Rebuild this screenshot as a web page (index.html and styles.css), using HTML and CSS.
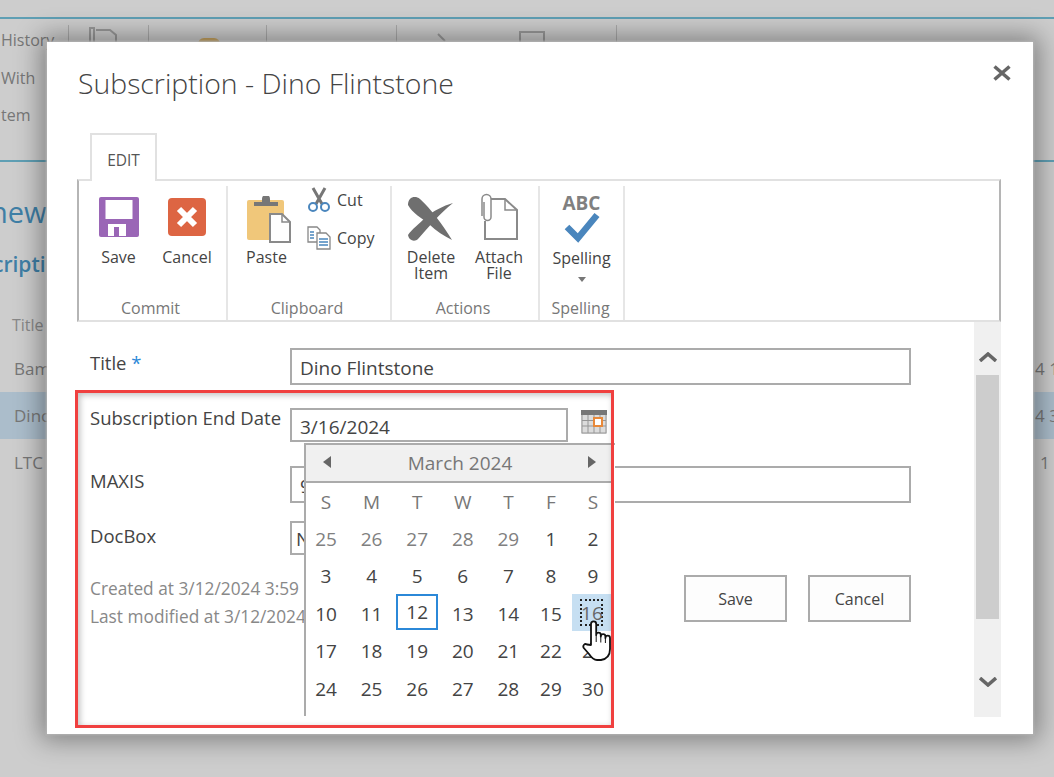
FILE: index.html
```html
<!DOCTYPE html>
<html lang="en">
<head>
<meta charset="utf-8">
<title>Subscription - Dino Flintstone</title>
<link rel="stylesheet" href="styles.css">
</head>
<body>
<div class="page">
  <div class="bg-top"></div>
  <div class="bg-toolbar">
    <div class="bg-tools-text"><span>History</span><span>With</span><span>tem</span></div>
    <div class="bg-tool t1"><svg width="32" height="18" viewBox="0 0 32 18"><path d="M2 18V2h4v16M8 4h14l6 5v9" class="bg-ico"/></svg></div>
    <div class="bg-tool t2"><span class="bg-dot"></span></div>
    <div class="bg-tool t3"><span class="bg-dash"></span></div>
    <div class="bg-tool t4">
      <svg width="20" height="18" viewBox="0 0 20 18"><path d="M6 8l7 7" class="bg-ico"/></svg>
      <svg width="32" height="18" viewBox="0 0 32 18"><path d="M2 18V6h24v12" class="bg-ico"/></svg>
    </div>
    <div class="bg-tool t5"></div>
  </div>
  <div class="bg-heading">new</div>
  <div class="bg-sub">cripti</div>
  <div class="bg-colhead">Title</div>
  <div class="bg-row"><span>Bam</span><span class="bg-val">4 1</span></div>
  <div class="bg-row sel"><span>Dino</span><span class="bg-val">4 3</span></div>
  <div class="bg-row"><span>LTC</span><span class="bg-val narrow">1 1</span></div>
</div>

<div class="dialog">
  <div class="dlg-title">Subscription - Dino Flintstone</div>
  <svg class="close" width="18" height="18" viewBox="0 0 18 18"><path d="M1.500 2.500L16.500 15.500M16.500 2.500L1.500 15.500" class="close-x"/></svg>

  <div class="tabs"><div class="tab">EDIT</div></div>
  <div class="ribbon">
    <div class="group g-commit">
      <div class="cmds">
        <div class="cmd c-save">
          <svg width="40" height="40" viewBox="0 0 40 40"><rect x="0" y="0" width="40" height="40" rx="2" fill="#9a66b6"/><rect x="6.500" y="3" width="27" height="19" fill="#fff"/><rect x="9" y="27" width="18" height="12" fill="#fff"/><rect x="15" y="30" width="5" height="9" fill="#9a66b6"/></svg>
          <span>Save</span>
        </div>
        <div class="cmd c-cancel">
          <svg width="38" height="38" viewBox="0 0 38 38"><rect width="38" height="38" rx="4" fill="#dd6543"/><path d="M11 11L27 27M27 11L11 27" stroke="#fff" stroke-width="6" fill="none"/></svg>
          <span>Cancel</span>
        </div>
      </div>
      <div class="glabel">Commit</div>
    </div>
    <div class="group g-clip">
      <div class="cmds">
        <div class="cmd c-paste">
          <svg width="44" height="47" viewBox="0 0 44 47"><rect x="0" y="4" width="37" height="40" rx="2" fill="#f0c77a"/><path d="M7 10V6h8V3a3 3 0 0 1 8 0v3h8v4z" fill="#777"/><path d="M23 18h12l8 8v20H23z" fill="#fff" stroke="#8a8a8a" stroke-width="2"/><path d="M35 18v8h8" fill="none" stroke="#8a8a8a" stroke-width="1.500"/></svg>
          <span>Paste</span>
        </div>
        <div class="cmd-stack">
          <div class="cmd-small">
            <svg width="24" height="25" viewBox="0 0 24 25"><path d="M6 1L15 17M18 1L9 17" stroke="#777" stroke-width="3" fill="none"/><circle cx="6" cy="20" r="4" fill="none" stroke="#4a86bd" stroke-width="2"/><circle cx="18" cy="20" r="4" fill="none" stroke="#4a86bd" stroke-width="2"/></svg>
            <span>Cut</span>
          </div>
          <div class="cmd-small">
            <svg width="24" height="24" viewBox="0 0 24 24"><path d="M1 1h9l3 3v12H1z" fill="#fff" stroke="#888" stroke-width="1.300"/><path d="M3 6h4M3 9h4M3 12h4" stroke="#4a86bd" stroke-width="1.500"/><path d="M10 7h9l4 4v12H10z" fill="#fff" stroke="#888" stroke-width="1.300"/><path d="M12 13h9M12 16h9M12 19h9" stroke="#4a86bd" stroke-width="1.500"/></svg>
            <span>Copy</span>
          </div>
        </div>
      </div>
      <div class="glabel">Clipboard</div>
    </div>
    <div class="group g-actions">
      <div class="cmds">
        <div class="cmd c-delete">
          <svg width="46" height="44" viewBox="0 0 46 44"><path d="M0 8C0 0 7-2 12 2C22 11 35 28 44 43C36 39 28 34 22 28C14 21 4 16 0 8z" fill="#6f6f6f"/><path d="M45 6C35 9 25 14 18 20C11 27 4 32 0 38C1 44 7 45 10 42C20 31 31 17 45 6z" fill="#6f6f6f"/></svg>
          <span>Delete<br>Item</span>
        </div>
        <div class="cmd c-attach">
          <svg width="38" height="47" viewBox="0 0 38 47"><path d="M10 6H25L37 17V46H5V28" fill="#fff" stroke="#8a8a8a" stroke-width="2"/><path d="M25 6V17H37" fill="none" stroke="#8a8a8a" stroke-width="1.500"/><path d="M6 8V23a3.500 3.500 0 0 0 7 0V5a4 4 0 0 0-9-0V22" transform="translate(-2 1)" fill="#fff" stroke="#8a8a8a" stroke-width="1.500"/></svg>
          <span>Attach<br>File</span>
        </div>
      </div>
      <div class="glabel">Actions</div>
    </div>
    <div class="group g-spell">
      <div class="cmds">
        <div class="cmd c-spell">
          <span class="abc">ABC</span>
          <svg width="36" height="31" viewBox="0 0 36 31"><path d="M3 15L14 26L33 3" fill="none" stroke="#4a86bd" stroke-width="6.500"/></svg>
          <span class="spell-label">Spelling</span>
          <span class="caret"></span>
        </div>
      </div>
      <div class="glabel">Spelling</div>
    </div>
  </div>

  <div class="body">
    <div class="form">
      <div class="row r-title">
        <label class="lbl">Title <span class="req">*</span></label>
        <div class="input i-full">Dino Flintstone</div>
      </div>
      <div class="row r-date">
        <label class="lbl">Subscription End Date</label>
        <div class="date-field">
          <div class="input i-date">3/16/2024</div>
          <svg class="cal-ico" width="26" height="24" viewBox="0 0 26 24"><rect width="26" height="24" fill="#dcdcdc"/><rect width="26" height="5" fill="#777"/><path d="M1 5V23H25V5M1 10.500H25M1 16H25M7 5V23M13 5V23M19 5V23" fill="none" stroke="#969696" stroke-width="1"/><rect x="13" y="8" width="8" height="8" fill="#fff" stroke="#e8893a" stroke-width="2"/></svg>
          <div class="calendar">
            <div class="cal-head">
              <span class="tri tri-l"></span>
              <span class="cal-month">March 2024</span>
              <span class="tri tri-r"></span>
            </div>
            <div class="cal-grid">
              <span class="wd">S</span><span class="wd">M</span><span class="wd">T</span><span class="wd">W</span><span class="wd">T</span><span class="wd">F</span><span class="wd">S</span>
              <span class="d o">25</span><span class="d o">26</span><span class="d o">27</span><span class="d o">28</span><span class="d o">29</span><span class="d">1</span><span class="d">2</span>
              <span class="d">3</span><span class="d">4</span><span class="d">5</span><span class="d">6</span><span class="d">7</span><span class="d">8</span><span class="d">9</span>
              <span class="d">10</span><span class="d">11</span><span class="d today">12</span><span class="d">13</span><span class="d">14</span><span class="d">15</span><span class="d hover"><i class="focus">16</i></span>
              <span class="d">17</span><span class="d">18</span><span class="d">19</span><span class="d">20</span><span class="d">21</span><span class="d">22</span><span class="d">23</span>
              <span class="d">24</span><span class="d">25</span><span class="d">26</span><span class="d">27</span><span class="d">28</span><span class="d">29</span><span class="d">30</span>
            </div>
          </div>
        </div>
      </div>
      <div class="row r-maxis">
        <label class="lbl">MAXIS</label>
        <div class="input i-full">9</div>
      </div>
      <div class="row r-doc">
        <label class="lbl">DocBox</label>
        <div class="input i-select">No</div>
      </div>
      <div class="foot">
        <div class="meta">
          <div>Created at 3/12/2024 3:59 PM</div>
          <div>Last modified at 3/12/2024 3:59 PM</div>
        </div>
        <div class="btns">
          <button class="btn">Save</button>
          <button class="btn">Cancel</button>
        </div>
      </div>
    </div>
    <div class="scroll">
      <svg width="18" height="10" viewBox="0 0 18 10"><path d="M1 9L9 2L17 9" class="chev"/></svg>
      <div class="thumb"></div>
      <svg class="chev-down" width="18" height="10" viewBox="0 0 18 10"><path d="M1 1L9 8L17 1" class="chev"/></svg>
    </div>
  </div>
</div>

<div class="annot"></div>
<svg class="hand" width="31" height="41" viewBox="0 0 31 41"><path d="M9 25V4a2.600 2.600 0 0 1 5.200 0V15a2.300 2.300 0 0 1 4.600 0v1.500a2.300 2.300 0 0 1 4.600 0V18a2.300 2.300 0 0 1 4.600 0V29c0 6-3 10-9 11h-4c-4 0-6-3-8-6L1.800 28c-1.500-2.500 1-5 3.200-3.500z" fill="#fff" stroke="#111" stroke-width="1.800" stroke-linejoin="round"/><path d="M14.200 15v7M18.800 16.500v6M23.400 18v5" stroke="#111" stroke-width="1" fill="none"/></svg>
</body>
</html>
```

FILE: styles.css
```css
* { box-sizing: border-box; }
html, body { margin: 0; padding: 0; }
body {
  width: 1054px;
  height: 777px;
  overflow: hidden;
  position: relative;
  background: #cdcdcd;
  font-family: "Open Sans", "Noto Sans", sans-serif;
  color: #444;
}

/* dimmed page behind the dialog */
.page { color: #777; font-size: 16px; }
.bg-top { height: 19px; border-bottom: 2px solid #5f9fb4; }
.bg-toolbar {
  display: flex;
  height: 143px;
  border-bottom: 2px solid #5f9fb4;
  padding-top: 6px;
}
.bg-tools-text {
  width: 68px;
  display: flex;
  flex-direction: column;
  gap: 17.500px;
  padding-top: 5px;
  line-height: 20px;
  padding-left: 1px;
}
.bg-tool { height: 19px; border-left: 1px solid #aaa; display: flex; align-items: flex-end; }
.t1 { width: 80px; padding-left: 19px; }
.t2 { width: 118px; padding-left: 49px; }
.t3 { width: 130px; padding-left: 51px; }
.t4 { width: 220px; padding-left: 35px; gap: 66px; }
.t5 { width: 40px; }
.bg-ico { fill: none; stroke: #999; stroke-width: 2; }
.bg-dot { width: 22px; height: 6px; background: #c9a45f; border-radius: 11px 11px 0 0; }
.bg-dash { width: 30px; height: 2px; background: #999; }
.bg-heading { margin: 30px 0 0 -10px; font-size: 29px; line-height: 40px; color: #3f7fa6; }
.bg-sub { margin: 19px 0 0 -7px; font-size: 21px; line-height: 26px; font-weight: 600; color: #3f7fa6; }
.bg-colhead { margin: 36px 0 0 12px; line-height: 24px; color: #888; }
.bg-row {
  display: flex;
  justify-content: space-between;
  height: 47px;
  align-items: center;
  padding-left: 14px;
  font-size: 17px;
}
.bg-colhead + .bg-row { margin-top: 8px; }
.bg-row.sel { background: #abbdcb; }
.bg-val { width: 19px; white-space: nowrap; }
.bg-val.narrow { padding-left: 5px; }

/* dialog */
.dialog {
  position: absolute;
  z-index: 0;
  left: 47px;
  top: 42px;
  width: 986px;
  height: 692px;
  background: #fff;
  padding: 0 32px 0 30px;
  box-shadow: 0 0 2px 1px #b5b5b5, 0 0 24px 6px rgba(0, 0, 0, .38);
}
.dlg-title {
  padding: 21px 0 0 1px;
  height: 91px;
  font-size: 28.400px;
  font-weight: 300;
  line-height: 40px;
  color: #444;
  white-space: nowrap;
}
.close { position: absolute; right: 22px; top: 22px; }
.close-x { fill: none; stroke: #666; stroke-width: 3.500; }

.tabs { display: flex; height: 46px; padding-left: 13px; }
.tab {
  width: 67px;
  height: 48px;
  background: #fff;
  border: 2px solid #e1e1e1;
  border-bottom: 0;
  text-align: center;
  font-size: 15.500px;
  line-height: 50px;
  color: #555;
  position: relative;
  z-index: 1;
}
.ribbon {
  display: flex;
  height: 143px;
  border: 2px solid #e1e1e1;
  border-left-color: #b5b5b5;
  border-right-color: #b5b5b5;
  padding-top: 5px;
}
.group {
  display: flex;
  flex-direction: column;
  border-right: 2px solid #e6e6e6;
}
.g-commit { width: 149px; }
.g-clip { width: 164px; }
.g-actions { width: 148px; }
.g-spell { width: 85px; }
.cmds { display: flex; height: 111px; }
.glabel { text-align: center; font-size: 16px; line-height: 22px; color: #777; padding-right: 4px; }
.g-spell .glabel { padding-right: 2px; }

.cmd {
  display: flex;
  flex-direction: column;
  align-items: center;
  font-size: 16px;
  line-height: 16px;
  text-align: center;
  color: #444;
}
.cmd svg { flex: none; }
.c-save { padding: 11px 0 0 19px; width: 60px; }
.c-save span { margin-top: 12px; }
.c-cancel { padding-top: 12px; margin-left: 29px; width: 38px; }
.c-cancel span { margin-top: 13px; }
.c-paste { width: 44px; margin-left: 19px; padding-top: 10px; }
.c-paste span { margin-top: 6px; margin-left: -5px; }
.cmd-stack { display: flex; flex-direction: column; margin: 1px 0 0 16px; gap: 14px; }
.cmd-small { display: flex; align-items: center; gap: 6px; font-size: 16px; line-height: 24px; color: #444; }
.c-delete { width: 60px; margin-left: 9px; padding-top: 11px; }
.c-delete span { margin-top: 8px; }
.c-attach { width: 60px; margin-left: 8px; padding-top: 7px; }
.c-attach span { margin-top: 9px; }
.c-spell { width: 84px; padding-top: 7px; }
.abc { font-size: 19px; line-height: 20px; font-weight: 700; color: #808080; }
.c-spell svg { margin-top: -1px; }
.spell-label { margin-top: 5px; line-height: 20px; }
.caret { margin-top: 9px; border: 4px solid transparent; border-top: 5px solid #777; border-bottom: 0; }

.body { display: flex; justify-content: space-between; height: 395px; }
.form { width: 834px; padding: 26px 0 0 13px; }
.row { display: flex; }
.lbl { width: 200px; flex: none; font-size: 18.500px; line-height: 24px; color: #444; white-space: nowrap; }
.req { color: #2b88d8; }
.r-title .lbl { margin-top: 3px; }
.r-date { margin-top: 23px; position: relative; z-index: 2; }
.r-date .lbl { margin-top: -2px; }
.r-maxis { margin-top: 24px; }
.r-maxis .lbl { margin-top: 3px; }
.r-doc { margin-top: 18px; }
.r-doc .lbl { margin-top: 3px; }
.input {
  border: 2px solid #ababab;
  background: #fff;
  font-size: 19px;
  padding-left: 8px;
  white-space: nowrap;
  overflow: hidden;
  color: #444;
}
.i-full { width: 621px; height: 37px; line-height: 36px; }
.i-date { width: 278px; height: 34px; line-height: 34px; }
.i-select { width: 120px; height: 34px; line-height: 32px; padding-left: 4px; }
.date-field { position: relative; display: flex; }
.cal-ico { margin: 2px 0 0 13px; }

.calendar {
  position: absolute;
  left: 14px;
  top: 35px;
  width: 311px;
  height: 273px;
  background: #fff;
  border-left: 2px solid #ababab;
  border-top: 2px solid #ababab;
}
.cal-head {
  height: 38px;
  background: #f0f0f0;
  border-bottom: 2px solid #ababab;
  display: flex;
  align-items: center;
  justify-content: space-between;
  padding: 0 16px 3px 17px;
  margin-right: 3px;
}
.cal-month { font-size: 19px; color: #777; padding-top: 3px; margin-left: 1px; }
.tri { border-top: 6px solid transparent; border-bottom: 6px solid transparent; }
.tri-l { border-right: 8px solid #666; }
.tri-r { border-left: 8px solid #666; }
.cal-grid {
  display: grid;
  grid-template-columns: 45.6px 45.6px 45.6px 45.6px 42.6px 42px 42px;
  grid-template-rows: 37px repeat(5, 37.500px);
  margin-left: -1px;
}
.wd, .d {
  width: 42px;
  display: flex;
  align-items: center;
  justify-content: center;
  font-size: 19px;
}
.wd { color: #777; }
.d { color: #444; }
.d.o { color: #808080; }
.d.today { height: 36px; margin-top: -1px; border: 2px solid #2b88d8; }
.d.hover { width: 39px; height: 37px; margin-top: -1px; background: #c6dff2; color: #666; }
.focus {
  font-style: normal;
  width: 23px;
  height: 27px;
  margin-left: 1px;
  border: 2px dotted #222;
  display: flex;
  align-items: center;
  justify-content: center;
}

.foot { display: flex; justify-content: space-between; margin-top: 20px; position: relative; }
.meta { font-size: 17.300px; line-height: 28px; color: #888; white-space: nowrap; }
.btns { display: flex; gap: 21px; }
.btn {
  width: 103px;
  height: 47px;
  background: #fdfdfd;
  border: 2px solid #ababab;
  font: 16px "Open Sans", sans-serif;
  color: #444;
  padding: 0;
}
.scroll {
  width: 27px;
  height: 395px;
  background: #f0f0f0;
  display: flex;
  flex-direction: column;
  align-items: center;
  padding-top: 30px;
}
.thumb { width: 23px; height: 244px; margin-top: 13px; background: #cdcdcd; flex: none; }
.chev-down { margin-top: 58px; }
.chev { fill: none; stroke: #666; stroke-width: 3.500; }

/* annotation over the screenshot */
.annot {
  position: absolute;
  left: 75px;
  top: 390px;
  width: 539px;
  height: 338px;
  border: 3px solid #f0403f;
  box-shadow: inset 2px 2px 6px rgba(0, 0, 0, .25);
  pointer-events: none;
}
.hand { position: absolute; left: 582px; top: 620px; }
```
